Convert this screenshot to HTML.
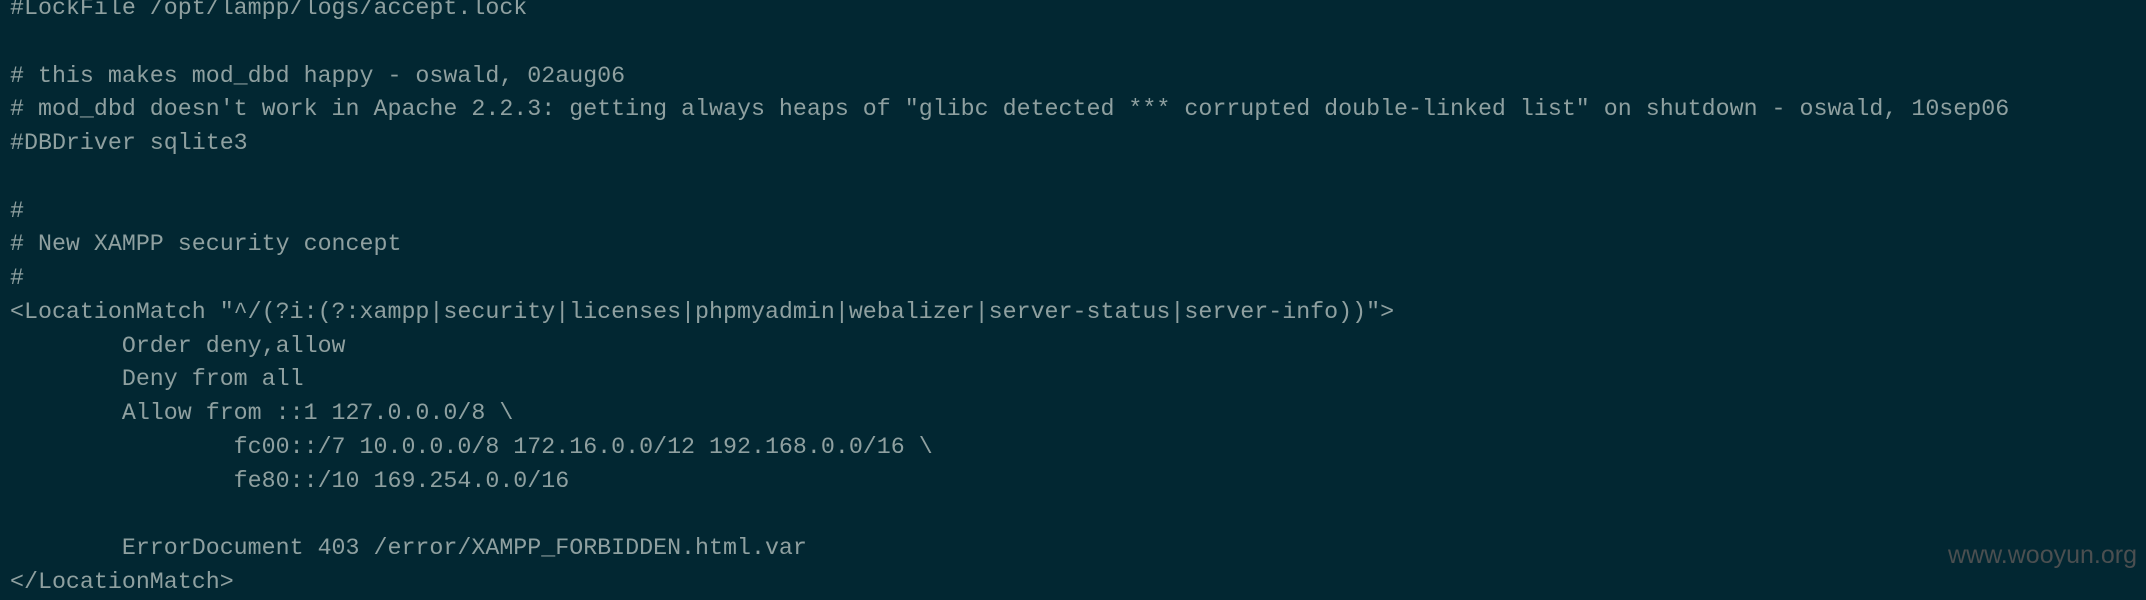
<!DOCTYPE html>
<html><head><meta charset="utf-8"><style>
html,body{margin:0;padding:0;width:2146px;height:588px;overflow:hidden;background:#022732;}
pre{position:absolute;left:10px;top:-8px;margin:0;font-family:"Liberation Mono",monospace;font-size:23.3px;line-height:33.75px;color:#8fa0a0;white-space:pre;}
.wm{position:absolute;right:9px;top:541px;font-family:"Liberation Sans",sans-serif;font-size:25px;color:#4b4f50;}
</style></head><body>
<pre>#LockFile /opt/lampp/logs/accept.lock

# this makes mod_dbd happy - oswald, 02aug06
# mod_dbd doesn't work in Apache 2.2.3: getting always heaps of "glibc detected *** corrupted double-linked list" on shutdown - oswald, 10sep06
#DBDriver sqlite3

#
# New XAMPP security concept
#
&lt;LocationMatch "^/(?i:(?:xampp|security|licenses|phpmyadmin|webalizer|server-status|server-info))"&gt;
        Order deny,allow
        Deny from all
        Allow from ::1 127.0.0.0/8 \
                fc00::/7 10.0.0.0/8 172.16.0.0/12 192.168.0.0/16 \
                fe80::/10 169.254.0.0/16

        ErrorDocument 403 /error/XAMPP_FORBIDDEN.html.var
&lt;/LocationMatch&gt;</pre>
<div class="wm">www.wooyun.org</div>
</body></html>
